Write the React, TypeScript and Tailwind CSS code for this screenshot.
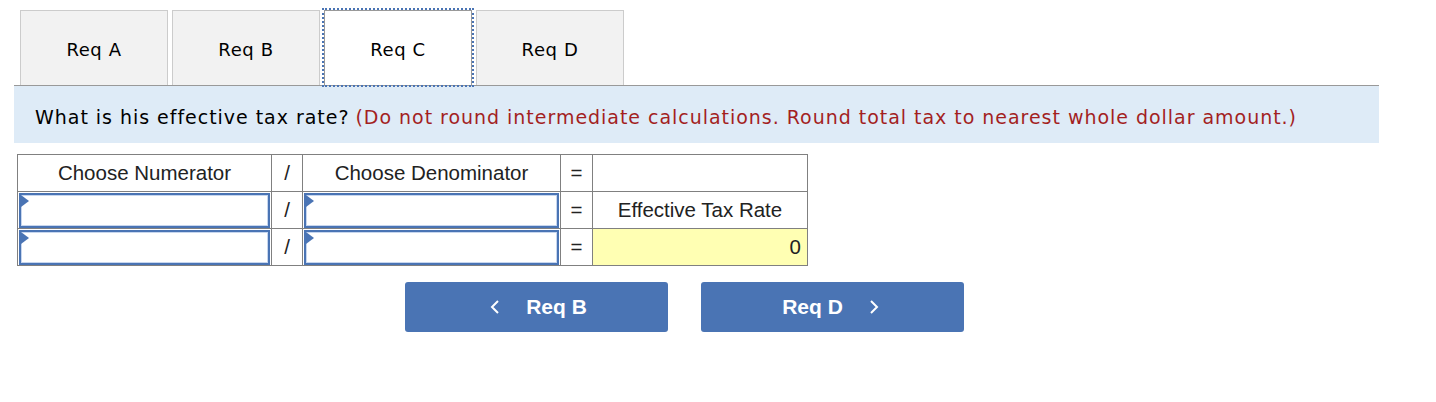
import React from 'react';

// Req C page: tab strip, prompt banner, ratio table and prev/next buttons

const tabs = ['Req A', 'Req B', 'Req C', 'Req D'];
const active = 'Req C';

function Tab({ label }: { label: string }) {
  const isActive = label === active;
  return (
    <div
      className={
        isActive
          ? 'w-[148px] h-[75px] flex items-center justify-center pt-[3px] bg-white border border-b-0 border-[#999] outline-2 outline-dotted outline-[#4a74b4] text-[18px] tracking-[0.6px] text-black'
          : 'w-[148px] h-[75px] flex items-center justify-center pt-[3px] bg-[#f2f2f2] border border-b-0 border-[#ccc] text-[18px] tracking-[0.6px] text-black'
      }
      style={{ fontFamily: '"DejaVu Sans", Verdana, sans-serif' }}
    >
      {label}
    </div>
  );
}

function Picker() {
  return (
    <div className="relative h-[35px] border-2 border-[#4a74b4] bg-white shadow-[inset_0_0_0_1px_#c7d6ee]">
      <svg className="absolute left-0 top-0" width="8" height="12" viewBox="0 0 8 12">
        <polygon points="0,0 8,6 0,12" fill="#4a74b4" />
      </svg>
    </div>
  );
}

const cell = 'border border-[#808080] h-[37px] p-0 text-center align-middle';

export default function App() {
  return (
    <div className="w-[1436px] h-[402px] bg-white pt-[10px] pl-[14px]">
      <div className="w-[1365px]">
        <div className="flex gap-[4px] pl-[6px] h-[75px]">
          {tabs.map((t) => (
            <Tab key={t} label={t} />
          ))}
        </div>
        <div className="border-t border-[#999]" />
        <div
          className="bg-[#deebf7] h-[57px] flex items-center pl-[21px] pt-[5px] text-[19px] tracking-[0.97px]"
          style={{ fontFamily: '"DejaVu Sans", Verdana, sans-serif' }}
        >
          <span className="text-black">What is his effective tax rate?</span>
          <span className="text-[#a31f1f] ml-[6px]">
            (Do not round intermediate calculations. Round total tax to nearest whole dollar amount.)
          </span>
        </div>
      </div>

      <table
        className="mt-[11px] ml-[3px] border-collapse text-[20.5px] text-[#222]"
        style={{ fontFamily: '"Liberation Sans", Arial, sans-serif' }}
      >
        <colgroup>
          <col className="w-[254px]" />
          <col className="w-[31px]" />
          <col className="w-[258px]" />
          <col className="w-[32px]" />
          <col className="w-[215px]" />
        </colgroup>
        <tbody>
          <tr>
            <td className={cell}>Choose Numerator</td>
            <td className={cell}>/</td>
            <td className={cell}>Choose Denominator</td>
            <td className={cell}>=</td>
            <td className={cell}></td>
          </tr>
          <tr>
            <td className={cell + ' px-[1px]'}>
              <Picker />
            </td>
            <td className={cell}>/</td>
            <td className={cell + ' px-[1px]'}>
              <Picker />
            </td>
            <td className={cell}>=</td>
            <td className={cell}>Effective Tax Rate</td>
          </tr>
          <tr>
            <td className={cell + ' px-[1px]'}>
              <Picker />
            </td>
            <td className={cell}>/</td>
            <td className={cell + ' px-[1px]'}>
              <Picker />
            </td>
            <td className={cell}>=</td>
            <td className={cell + ' bg-[#ffffb3] text-right pr-[6px]'}>0</td>
          </tr>
        </tbody>
      </table>

      <div
        className="flex gap-[33px] ml-[391px] mt-[16px] text-white font-bold text-[21px]"
        style={{ fontFamily: '"Liberation Sans", Arial, sans-serif' }}
      >
        <button className="w-[263px] h-[50px] rounded-[3px] bg-[#4a74b4] flex items-center justify-center gap-[26px] pl-[4px]">
          <svg width="10" height="16" viewBox="0 0 10 16" fill="none">
            <path d="M8 2 L2 8 L8 14" stroke="white" strokeWidth="2" />
          </svg>
          <span>Req B</span>
        </button>
        <button className="w-[263px] h-[50px] rounded-[3px] bg-[#4a74b4] flex items-center justify-center gap-[26px] pr-[4px]">
          <span>Req D</span>
          <svg width="10" height="16" viewBox="0 0 10 16" fill="none">
            <path d="M2 2 L8 8 L2 14" stroke="white" strokeWidth="2" />
          </svg>
        </button>
      </div>
    </div>
  );
}
